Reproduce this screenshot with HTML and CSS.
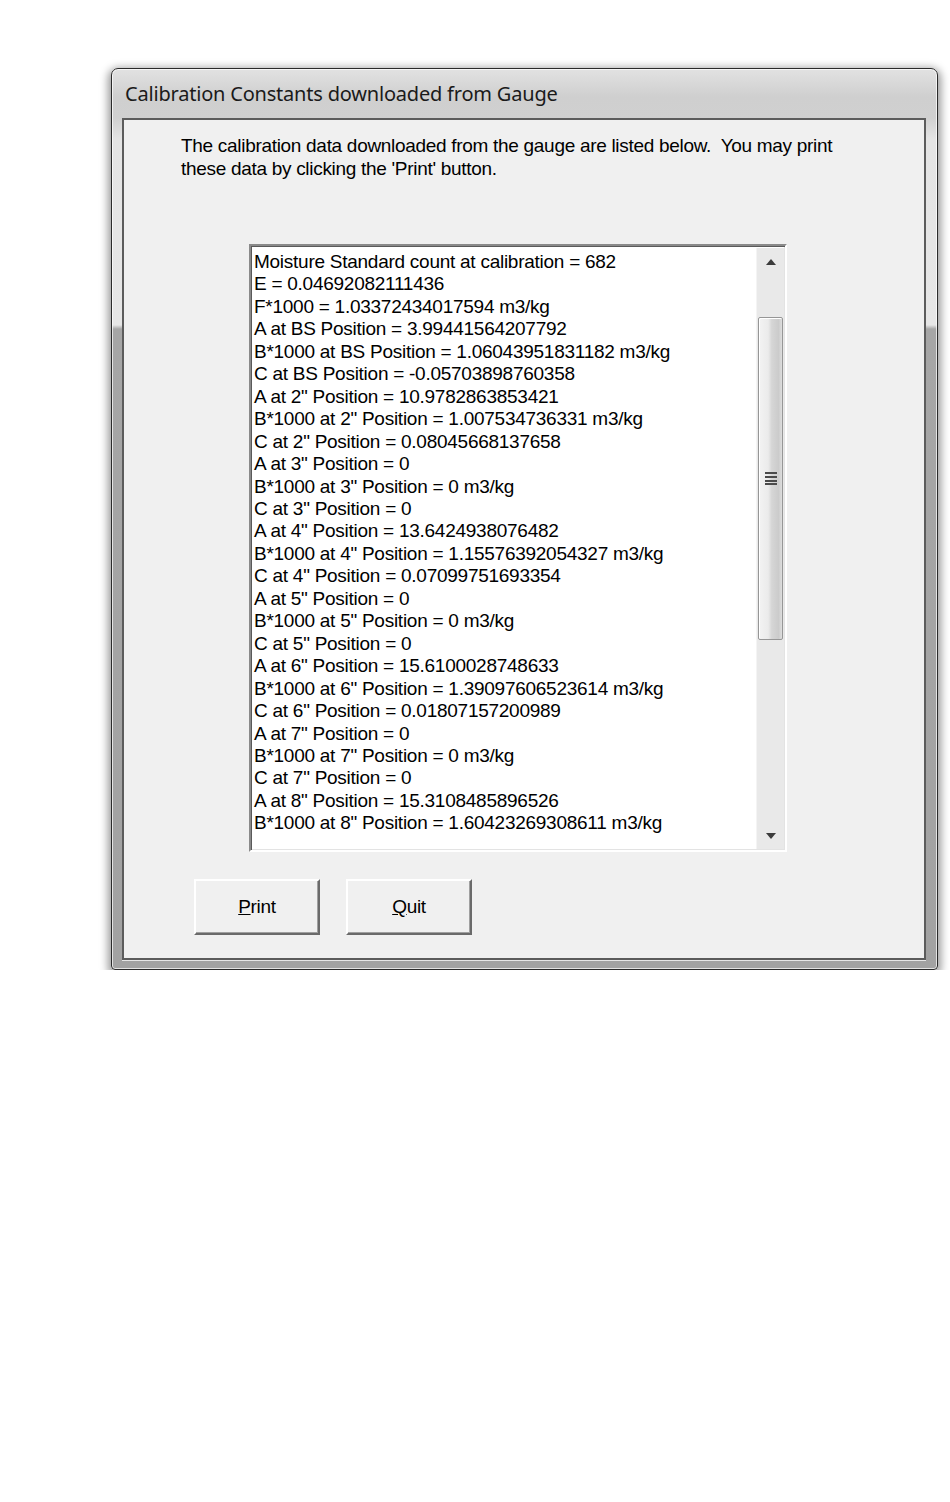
FILE: index.html
```
<!DOCTYPE html>
<html lang="en">
<head>
    <meta charset="UTF-8">
    <meta name="viewport" content="width=device-width, initial-scale=1.0">
    <title>Calibration Constants downloaded from Gauge</title>
    <link rel="stylesheet" href="styles.css">
</head>
<body>
    <div class="page">
        <div class="window">
            <div class="titlebar">Calibration Constants downloaded from Gauge</div>
            <div class="client">
                <p class="intro">The calibration data downloaded from the gauge are listed below.&nbsp; You may print<br>these data by clicking the 'Print' button.</p>

                <div class="listbox">
                    <div class="list-items">
                        <div>Moisture Standard count at calibration = 682</div>
                        <div>E = 0.04692082111436</div>
                        <div>F*1000 = 1.03372434017594 m3/kg</div>
                        <div>A at BS Position = 3.99441564207792</div>
                        <div>B*1000 at BS Position = 1.06043951831182 m3/kg</div>
                        <div>C at BS Position = -0.05703898760358</div>
                        <div>A at 2" Position = 10.9782863853421</div>
                        <div>B*1000 at 2" Position = 1.007534736331 m3/kg</div>
                        <div>C at 2" Position = 0.08045668137658</div>
                        <div>A at 3" Position = 0</div>
                        <div>B*1000 at 3" Position = 0 m3/kg</div>
                        <div>C at 3" Position = 0</div>
                        <div>A at 4" Position = 13.6424938076482</div>
                        <div>B*1000 at 4" Position = 1.15576392054327 m3/kg</div>
                        <div>C at 4" Position = 0.07099751693354</div>
                        <div>A at 5" Position = 0</div>
                        <div>B*1000 at 5" Position = 0 m3/kg</div>
                        <div>C at 5" Position = 0</div>
                        <div>A at 6" Position = 15.6100028748633</div>
                        <div>B*1000 at 6" Position = 1.39097606523614 m3/kg</div>
                        <div>C at 6" Position = 0.01807157200989</div>
                        <div>A at 7" Position = 0</div>
                        <div>B*1000 at 7" Position = 0 m3/kg</div>
                        <div>C at 7" Position = 0</div>
                        <div>A at 8" Position = 15.3108485896526</div>
                        <div>B*1000 at 8" Position = 1.60423269308611 m3/kg</div>
                    </div>
                    <div class="scrollbar">
                        <div class="sb-btn">
                            <svg width="10" height="6" viewBox="0 0 10 6"><path d="M5 0 L10 6 L0 6 Z" fill="#3c3c3c"/></svg>
                        </div>
                        <div class="sb-track">
                            <div class="sb-thumb">
                                <svg width="12" height="13" viewBox="0 0 12 13">
                                    <rect x="0" y="0" width="12" height="2" fill="#4a4a4a"/>
                                    <rect x="0" y="4" width="12" height="2" fill="#4a4a4a"/>
                                    <rect x="0" y="8" width="12" height="2" fill="#4a4a4a"/>
                                    <rect x="0" y="11" width="12" height="2" fill="#4a4a4a"/>
                                </svg>
                            </div>
                        </div>
                        <div class="sb-btn">
                            <svg width="10" height="6" viewBox="0 0 10 6"><path d="M0 0 L10 0 L5 6 Z" fill="#3c3c3c"/></svg>
                        </div>
                    </div>
                </div>

                <div class="buttons">
                    <button class="btn"><u>P</u>rint</button>
                    <button class="btn"><u>Q</u>uit</button>
                </div>
            </div>
        </div>
    </div>
</body>
</html>
```

FILE: styles.css
```
body {
    margin: 0;
    background: #ffffff;
    font-family: "Liberation Sans", Arial, sans-serif;
    color: #000;
}
.page {
    padding: 68px 0 0 111px;
}
.window {
    box-sizing: border-box;
    width: 827px;
    height: 902px;
    border: 1px solid #2b2b2b;
    border-radius: 7px 7px 4px 4px;
    padding: 0 11px 9px 10px;
    background: linear-gradient(to bottom, #e2e2e2 0, #cfcfcf 28px, #d0d0d0 49px, #e4e4e4 70px, #e6e6e6 256px, #a6a6a6 260px, #a2a2a2 100%);
    box-shadow: 0 3px 9px 3px rgba(0,0,0,0.4), inset 0 0 0 1px rgba(255,255,255,0.7);
}
.titlebar {
    height: 49px;
    line-height: 50px;
    padding-left: 3px;
    font-family: "Noto Sans", "Open Sans", sans-serif;
    font-size: 20px;
    color: #1a1a1a;
    letter-spacing: -0.2px;
}
.client {
    box-sizing: border-box;
    height: 842px;
    background: #f0f0f0;
    border: 2px solid #5c5c5c;
    box-shadow: 0 1px 0 #e6e6e6;
}
.intro {
    margin: 0;
    padding: 14px 0 0 57px;
    font-size: 19px;
    letter-spacing: -0.3px;
    line-height: 23px;
}
.listbox {
    box-sizing: border-box;
    display: flex;
    width: 538px;
    height: 608px;
    margin: 64px 0 0 125px;
    background: #fff;
    border: 2px solid;
    border-color: #8a8a8a #fff #fff #8a8a8a;
    box-shadow: inset 1px 1px 0 #5a5a5a, inset -1px -1px 0 #e3e3e3;
}
.list-items {
    flex: 1;
    padding: 5px 0 0 3px;
    font-size: 19px;
    letter-spacing: -0.26px;
    line-height: 22.45px;
    white-space: nowrap;
    overflow: hidden;
}
.scrollbar {
    width: 27px;
    margin: 2px 1px 1px 0;
    display: flex;
    flex-direction: column;
    background: #e9e9e9;
    border-left: 1px solid #f4f4f4;
}
.sb-btn {
    height: 27px;
    display: flex;
    align-items: center;
    justify-content: center;
}
.sb-track {
    flex: 1;
    padding-top: 42px;
}
.sb-thumb {
    box-sizing: border-box;
    height: 323px;
    margin: 0 1px;
    border: 1px solid #969696;
    border-radius: 2px;
    background: linear-gradient(to right, #f3f3f3 0%, #ebebeb 40%, #d6d6d6 55%, #cbcbcb 85%, #dedede 100%);
    box-shadow: inset 1px 1px 0 #fff;
    display: flex;
    align-items: center;
    justify-content: center;
}
.buttons {
    display: flex;
    gap: 26px;
    margin: 27px 0 0 70px;
}
.btn {
    box-sizing: border-box;
    width: 126px;
    height: 56px;
    padding: 0;
    background: #f0f0f0;
    border: 2px solid;
    border-color: #fff #6a6a6a #6a6a6a #fff;
    box-shadow: inset -1px -1px 0 #a0a0a0;
    font-family: "Liberation Sans", Arial, sans-serif;
    font-size: 19px;
    letter-spacing: -0.3px;
    color: #000;
}
```
